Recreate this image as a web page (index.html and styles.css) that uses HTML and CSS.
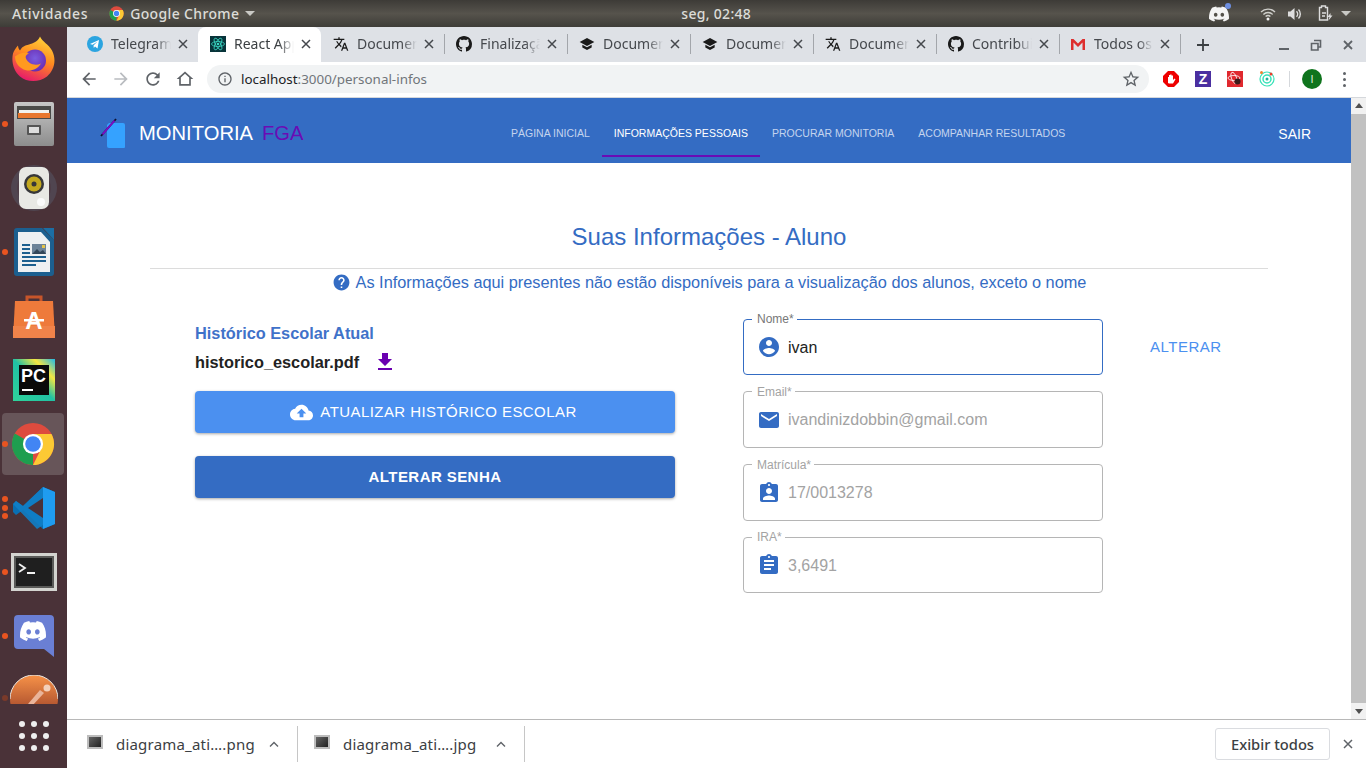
FILE: index.html
```html
<!DOCTYPE html>
<html>

<head>
	<meta charset="utf-8">
	<title>React App</title>
	<link rel="stylesheet" href="styles.css">
</head>

<body>
	<svg class="defs" width="0" height="0">
		<defs>
			<symbol id="i-github" viewBox="0 0 16 16"><path d="M8 0C3.58 0 0 3.58 0 8c0 3.54 2.29 6.53 5.47 7.59.4.07.55-.17.55-.38 0-.19-.01-.82-.01-1.49-2.01.37-2.53-.49-2.69-.94-.09-.23-.48-.94-.82-1.13-.28-.15-.68-.52-.01-.53.63-.01 1.08.58 1.23.82.72 1.21 1.87.87 2.33.66.07-.52.28-.87.51-1.07-1.78-.2-3.64-.89-3.64-3.95 0-.87.31-1.59.82-2.15-.08-.2-.36-1.02.08-2.12 0 0 .67-.21 2.2.82.64-.18 1.32-.27 2-.27.68 0 1.36.09 2 .27 1.53-1.04 2.2-.82 2.2-.82.44 1.1.16 1.92.08 2.12.51.56.82 1.27.82 2.15 0 3.07-1.87 3.75-3.65 3.95.29.25.54.73.54 1.48 0 1.07-.01 1.93-.01 2.2 0 .21.15.46.55.38A8.013 8.013 0 0016 8c0-4.42-3.58-8-8-8z"/></symbol>
			<symbol id="i-translate" viewBox="0 0 24 24"><path d="M12.87 15.07l-2.54-2.51.03-.03c1.74-1.94 2.98-4.17 3.71-6.53H17V4h-7V2H8v2H1v1.99h11.17C11.5 7.92 10.44 9.75 9 11.35 8.07 10.32 7.3 9.19 6.69 8h-2c.73 1.63 1.73 3.17 2.98 4.56l-5.09 5.02L4 19l5-5 3.11 3.11.76-2.04zM18.5 10h-2L12 22h2l1.12-3h4.75L21 22h2l-4.5-12zm-2.62 7l1.62-4.33L19.12 17h-3.24z"/></symbol>
			<symbol id="i-school" viewBox="0 0 24 24"><path d="M5 13.18v4L12 21l7-3.82v-4L12 17l-7-3.82zM12 3L1 9l11 6 11-6-11-6z"/></symbol>
			<symbol id="i-close" viewBox="0 0 10 10"><path d="M1 1l8 8M9 1L1 9" fill="none" stroke="currentColor" stroke-width="1.5"/></symbol>
			<symbol id="i-discord" viewBox="0 0 24 24"><path d="M20.317 4.37a19.79 19.79 0 0 0-4.885-1.515.074.074 0 0 0-.079.037c-.21.375-.444.864-.608 1.25a18.27 18.27 0 0 0-5.487 0 12.64 12.64 0 0 0-.617-1.25.077.077 0 0 0-.079-.037A19.736 19.736 0 0 0 3.677 4.37a.07.07 0 0 0-.032.027C.533 9.046-.32 13.58.099 18.057a.082.082 0 0 0 .031.057 19.9 19.9 0 0 0 5.993 3.03.078.078 0 0 0 .084-.028c.462-.63.874-1.295 1.226-1.994a.076.076 0 0 0-.041-.106 13.107 13.107 0 0 1-1.872-.892.077.077 0 0 1-.008-.128c.126-.094.252-.192.372-.292a.074.074 0 0 1 .077-.01c3.928 1.793 8.18 1.793 12.062 0a.074.074 0 0 1 .078.01c.12.098.246.198.373.292a.077.077 0 0 1-.006.127 12.299 12.299 0 0 1-1.873.892.077.077 0 0 0-.041.107c.36.698.772 1.362 1.225 1.993a.076.076 0 0 0 .084.028 19.839 19.839 0 0 0 6.002-3.03.077.077 0 0 0 .032-.054c.5-5.177-.838-9.674-3.549-13.66a.061.061 0 0 0-.031-.03zM8.02 15.33c-1.183 0-2.157-1.085-2.157-2.419 0-1.333.956-2.419 2.157-2.419 1.21 0 2.176 1.096 2.157 2.42 0 1.333-.956 2.418-2.157 2.418zm7.975 0c-1.183 0-2.157-1.085-2.157-2.419 0-1.333.955-2.419 2.157-2.419 1.21 0 2.176 1.096 2.157 2.42 0 1.333-.946 2.418-2.157 2.418z"/></symbol>
			<symbol id="i-chrome" viewBox="0 0 48 48">
				<circle cx="24" cy="24" r="23" fill="#dd4b3e"/>
				<path d="M24 24L4.1 12.5A23 23 0 0 0 24 47z" fill="#1e9e4f"/>
				<path d="M24 13h20.2A23 23 0 0 1 24 47l10-20z" fill="#fcc934"/>
				<circle cx="24" cy="24" r="11" fill="#fff"/>
				<circle cx="24" cy="24" r="8.5" fill="#4285f4"/>
			</symbol>
		</defs>
	</svg>

	<div class="topbar">
		<span class="top-activities">Atividades</span>
		<svg class="top-chrome" width="15" height="15"><use href="#i-chrome"/></svg>
		<span class="top-app">Google Chrome</span>
		<i class="caret"></i>
		<span class="top-clock">seg, 02:48</span>
		<div class="tray">
			<span class="tray-discord">
				<svg width="20" height="20" viewBox="0 0 24 24" fill="#f4f4f4"><use href="#i-discord"/></svg>
				<i class="tray-badge"></i>
			</span>
			<svg class="tray-wifi" width="16" height="14" viewBox="0 0 16 14"><path d="M1 5a10 10 0 0 1 14 0M3.4 7.4a6.6 6.6 0 0 1 9.2 0M5.6 9.6a3.4 3.4 0 0 1 4.8 0" fill="none" stroke="#cfcfcb" stroke-width="1.4"/><circle cx="8" cy="12" r="1.5" fill="#f0f0f0"/></svg>
			<svg class="tray-vol" width="16" height="14" viewBox="0 0 16 14"><path d="M1 4.5h2.5L7.5 1v12L3.5 9.5H1z" fill="#ddd"/><path d="M9.5 4.2a4 4 0 0 1 0 5.6M11.5 2.5a6.5 6.5 0 0 1 0 9" fill="none" stroke="#ddd" stroke-width="1.4"/></svg>
			<svg class="tray-bat" width="15" height="17" viewBox="0 0 15 17"><path d="M3.5 1h4v1.5h2V15H1.5V2.5h2z" fill="none" stroke="#ddd" stroke-width="1.4"/><path d="M4 8h4M4 11h3" stroke="#ddd" stroke-width="1.3"/><path d="M12.5 8L9.5 12h2L10.5 15.5l4-5h-2z" fill="#ddd"/></svg>
			<i class="caret"></i>
		</div>
	</div>

	<div class="desktop">
		<nav class="dock">
			<div class="dock-slot">
				<svg class="dock-firefox" width="46" height="47" viewBox="0 0 46 46">
					<defs>
						<linearGradient id="ffg" x1="0.7" y1="0" x2="0.3" y2="1"><stop offset="0" stop-color="#ffd43b"/><stop offset="0.45" stop-color="#ff8a1f"/><stop offset="1" stop-color="#e5166e"/></linearGradient>
						<radialGradient id="ffc" cx="0.5" cy="0.4" r="0.6"><stop offset="0" stop-color="#7a5ce0"/><stop offset="1" stop-color="#6a2bb0"/></radialGradient>
					</defs>
					<path d="M29 1c2 5 9 8 12 14 5 10 2 20-5 26-8 6-20 6-27 0C3 36 0 27 2 18c1-3 3-6 5-8 0 2 1 4 2 5 2-4 5-5 9-6 4-1 9-3 11-8z" fill="url(#ffg)"/>
					<circle cx="24" cy="25" r="11" fill="url(#ffc)"/>
					<path d="M4 21c4-3 9-5 14-3-3 1-4 3-3 5 2 5 9 8 15 5-4 7-13 9-19 5-5-3-7-8-7-12z" fill="#ff9a1f"/>
				</svg>
			</div>
			<div class="dock-slot">
				<i class="dock-dot dot-a"></i>
				<svg width="42" height="46" viewBox="0 0 42 46">
					<defs><linearGradient id="cab" x1="0" y1="0" x2="0" y2="1"><stop offset="0" stop-color="#c6c6c6"/><stop offset="1" stop-color="#8d8d8d"/></linearGradient></defs>
					<rect x="1" y="1" width="40" height="44" rx="2" fill="url(#cab)"/>
					<rect x="4" y="5" width="34" height="13" fill="#4a4a48"/>
					<rect x="6" y="9" width="30" height="3" fill="#f2f2ee"/>
					<rect x="5" y="12" width="32" height="5" fill="#e8772e"/>
					<rect x="14" y="24" width="14" height="10" rx="1" fill="#555"/>
					<rect x="16" y="26" width="10" height="6" fill="#ddd"/>
				</svg>
			</div>
			<div class="dock-slot">
				<svg width="48" height="46" viewBox="0 0 48 46">
					<circle cx="24" cy="23" r="23" fill="#5b6a7f" opacity="0.35"/>
					<circle cx="24" cy="23" r="17" fill="#4a3139" opacity="0.4"/>
					<rect x="9" y="2" width="30" height="42" rx="7" fill="#e8e8e4"/>
					<circle cx="24" cy="19" r="10" fill="#37373a"/>
					<circle cx="24" cy="19" r="7.5" fill="#c3a81f"/>
					<circle cx="24" cy="19" r="2.5" fill="#37373a"/>
					<circle cx="31" cy="37" r="4" fill="#fafafa"/>
				</svg>
			</div>
			<div class="dock-slot">
				<i class="dock-dot dot-a"></i>
				<svg width="40" height="48" viewBox="0 0 40 48">
					<path d="M3 0h25l12 12v33a3 3 0 0 1-3 3H3a3 3 0 0 1-3-3V3a3 3 0 0 1 3-3z" fill="#1c5f8f"/>
					<path d="M4 4h23l9 10v30H4z" fill="#eef0f2"/>
					<path d="M29 0l11 12V0z" fill="#1c6ea4"/>
					<path d="M8 16h8v2H8zM8 20h8v2H8zM8 24h8v2H8zM8 28h24v2H8zM8 32h24v2H8zM8 36h14v2H8z" fill="#1c5f8f"/>
					<rect x="18" y="16" width="14" height="10" fill="#6d8398"/>
					<path d="M18 26l5-5 3 3 3-2 3 4z" fill="#33475a"/>
					<rect x="28" y="17" width="3" height="3" fill="#e3c34a"/>
				</svg>
			</div>
			<div class="dock-slot">
				<svg width="42" height="44" viewBox="0 0 42 44">
					<path d="M14 8V3h14v5" fill="none" stroke="#c7552a" stroke-width="3"/>
					<path d="M2 7h38l2 37H0z" fill="#ee7a3b"/>
					<rect y="32" width="42" height="12" fill="#f0834a"/>
					<text class="dock-a" x="21" y="35" text-anchor="middle">A</text>
					<rect x="11" y="25" width="20" height="2.5" fill="#fff"/>
				</svg>
			</div>
			<div class="dock-slot">
				<svg width="42" height="42" viewBox="0 0 42 42">
					<defs><linearGradient id="pcg" x1="0" y1="1" x2="1" y2="0"><stop offset="0" stop-color="#2fd39a"/><stop offset="0.5" stop-color="#21c1a4"/><stop offset="0.75" stop-color="#f5e642"/><stop offset="1" stop-color="#20b8e8"/></linearGradient></defs>
					<rect width="42" height="42" fill="url(#pcg)"/>
					<rect x="6" y="6" width="30" height="30" fill="#0a0a0a"/>
					<text class="dock-pc" x="8" y="23">PC</text>
					<rect x="9" y="30" width="11" height="2" fill="#fff"/>
				</svg>
			</div>
			<div class="dock-slot dock-active">
				<i class="dock-dot dot-a"></i>
				<svg width="44" height="44"><use href="#i-chrome"/></svg>
			</div>
			<div class="dock-slot">
				<i class="dock-dot dot-c1"></i>
				<i class="dock-dot dot-c2"></i>
				<i class="dock-dot dot-c3"></i>
				<svg width="42" height="42" viewBox="0 0 42 42">
					<path d="M30 0l12 5v32l-12 5-20-19L3 28l-3-3V17l3-3 7 5z" fill="#0a6fb3"/>
					<path d="M30 0l12 5v32l-12 5z" fill="#1f9cf0"/>
					<path d="M30 0L10 19 3 14l-3 3 24 25 6-4z" fill="#0f7ec6" opacity="0.9"/>
					<path d="M30 11L15 21l15 10z" fill="#4a3139"/>
				</svg>
			</div>
			<div class="dock-slot">
				<i class="dock-dot dot-a"></i>
				<svg width="46" height="38" viewBox="0 0 46 38">
					<rect width="46" height="38" fill="#d4d4d0"/>
					<rect x="3" y="3" width="40" height="32" fill="#5a5a58"/>
					<rect x="5" y="5" width="36" height="28" fill="#1f1f1f"/>
					<path d="M8 11l6 4-6 4" fill="none" stroke="#f2f2f2" stroke-width="1.8"/>
					<rect x="16" y="19" width="8" height="2" fill="#f2f2f2"/>
				</svg>
			</div>
			<div class="dock-slot">
				<i class="dock-dot dot-a"></i>
				<svg width="40" height="42" viewBox="0 0 40 42">
					<path d="M4 0h32a4 4 0 0 1 4 4v38l-10-8H4a4 4 0 0 1-4-4V4a4 4 0 0 1 4-4z" fill="#6a7fd4"/>
					<svg x="6" y="3" width="26" height="26" viewBox="0 0 24 24" fill="#fff"><use href="#i-discord"/></svg>
				</svg>
			</div>
			<div class="dock-slot dock-cut">
				<i class="dock-dot dot-dim"></i>
				<svg width="48" height="48" viewBox="0 0 48 48">
					<defs><linearGradient id="pmg" x1="0" y1="0" x2="0" y2="1"><stop offset="0" stop-color="#f79248"/><stop offset="0.6" stop-color="#b85a32"/></linearGradient></defs>
					<circle cx="24" cy="24" r="24" fill="url(#pmg)"/>
					<path d="M0 24a24 24 0 0 1 48 0" fill="none" stroke="#e8e4df" stroke-width="1"/>
					<path d="M18 29l12-14 4 3-12 13z" fill="#e9b49a"/>
					<circle cx="37" cy="13" r="3.5" fill="#f3d0ba"/>
				</svg>
			</div>
			<div class="dock-apps">
				<i></i><i></i><i></i><i></i><i></i><i></i><i></i><i></i><i></i>
			</div>
		</nav>

		<div class="window">
			<div class="tabstrip">
				<div class="tab">
					<svg class="tab-ico" viewBox="0 0 16 16"><circle cx="8" cy="8" r="8" fill="#2ba4e0"/><path d="M3 8l9-4-1.5 8.5L8 10.5 6.8 12 6.5 9.5 10.5 5.5 5.5 8.8z" fill="#fff"/></svg>
					<span class="tab-title">Telegram</span>
					<svg class="tab-x"><use href="#i-close"/></svg>
				</div>
				<i class="tab-sep off"></i>
				<div class="tab tab-active">
					<svg class="tab-ico" viewBox="0 0 16 16"><rect width="16" height="16" fill="#08343a"/><g fill="none" stroke="#39d6c2" stroke-width="0.8"><ellipse cx="8" cy="8" rx="6.5" ry="2.5"/><ellipse cx="8" cy="8" rx="6.5" ry="2.5" transform="rotate(60 8 8)"/><ellipse cx="8" cy="8" rx="6.5" ry="2.5" transform="rotate(120 8 8)"/></g><circle cx="8" cy="8" r="1.3" fill="#39d6c2"/></svg>
					<span class="tab-title">React App</span>
					<svg class="tab-x"><use href="#i-close"/></svg>
				</div>
				<i class="tab-sep off"></i>
				<div class="tab">
					<svg class="tab-ico"><use href="#i-translate"/></svg>
					<span class="tab-title">Documentação</span>
					<svg class="tab-x"><use href="#i-close"/></svg>
				</div>
				<i class="tab-sep"></i>
				<div class="tab">
					<svg class="tab-ico"><use href="#i-github"/></svg>
					<span class="tab-title">Finalização</span>
					<svg class="tab-x"><use href="#i-close"/></svg>
				</div>
				<i class="tab-sep"></i>
				<div class="tab">
					<svg class="tab-ico"><use href="#i-school"/></svg>
					<span class="tab-title">Documentação</span>
					<svg class="tab-x"><use href="#i-close"/></svg>
				</div>
				<i class="tab-sep"></i>
				<div class="tab">
					<svg class="tab-ico"><use href="#i-school"/></svg>
					<span class="tab-title">Documentação</span>
					<svg class="tab-x"><use href="#i-close"/></svg>
				</div>
				<i class="tab-sep"></i>
				<div class="tab">
					<svg class="tab-ico"><use href="#i-translate"/></svg>
					<span class="tab-title">Documentação</span>
					<svg class="tab-x"><use href="#i-close"/></svg>
				</div>
				<i class="tab-sep"></i>
				<div class="tab">
					<svg class="tab-ico"><use href="#i-github"/></svg>
					<span class="tab-title">Contribuição</span>
					<svg class="tab-x"><use href="#i-close"/></svg>
				</div>
				<i class="tab-sep"></i>
				<div class="tab tab-last">
					<svg class="tab-ico" viewBox="0 0 16 16"><path d="M1 3h2.5L8 7.5 12.5 3H15v11h-2.5V6.5L8 11 3.5 6.5V14H1z" fill="#dd2e2e"/></svg>
					<span class="tab-title">Todos os e-mails</span>
					<svg class="tab-x"><use href="#i-close"/></svg>
				</div>
				<i class="tab-sep"></i>
				<svg class="tab-new" width="14" height="14" viewBox="0 0 14 14"><path d="M7 1v12M1 7h12" stroke="#3c4043" stroke-width="1.8"/></svg>
				<div class="win-ctrl">
					<svg width="12" height="12" viewBox="0 0 12 12"><path d="M1 10h10" stroke="#5f6368" stroke-width="2"/></svg>
					<svg width="12" height="12" viewBox="0 0 12 12"><path d="M4 1.5h6.5V8H8M1.5 4.5H8V11H1.5z" fill="none" stroke="#5f6368" stroke-width="1.6"/></svg>
					<svg width="12" height="12" viewBox="0 0 12 12"><path d="M2 2l8 8M10 2l-8 8" stroke="#5f6368" stroke-width="1.8"/></svg>
				</div>
			</div>

			<div class="toolbar">
				<svg class="tool-btn" viewBox="0 0 24 24"><path d="M20 11H7.83l5.59-5.59L12 4l-8 8 8 8 1.41-1.41L7.83 13H20v-2z"/></svg>
				<svg class="tool-btn tool-off" viewBox="0 0 24 24"><path d="M12 4l-1.41 1.41L16.17 11H4v2h12.17l-5.58 5.59L12 20l8-8z"/></svg>
				<svg class="tool-btn" viewBox="0 0 24 24"><path d="M17.65 6.35C16.2 4.9 14.21 4 12 4c-4.42 0-7.99 3.58-7.99 8s3.57 8 7.99 8c3.73 0 6.84-2.55 7.73-6h-2.08c-.82 2.33-3.04 4-5.65 4-3.31 0-6-2.69-6-6s2.69-6 6-6c1.66 0 3.14.69 4.22 1.78L13 11h7V4l-2.35 2.35z"/></svg>
				<svg class="tool-btn" viewBox="0 0 24 24"><path d="M12 5.69l5 4.5V18H7v-7.81l5-4.5M12 3L2 12h3v8h14v-8h3L12 3z"/></svg>
				<div class="omnibox">
					<svg class="omni-info" viewBox="0 0 24 24"><path d="M11 7h2v2h-2zm0 4h2v6h-2zm1-9C6.48 2 2 6.48 2 12s4.48 10 10 10 10-4.48 10-10S17.52 2 12 2zm0 18c-4.41 0-8-3.59-8-8s3.59-8 8-8 8 3.59 8 8-3.59 8-8 8z"/></svg>
					<span class="omni-url"><b>localhost</b>:3000/personal-infos</span>
					<svg class="omni-star" viewBox="0 0 24 24"><path d="M22 9.24l-7.19-.62L12 2 9.19 8.63 2 9.24l5.46 4.73L5.82 21 12 17.27 18.18 21l-1.63-7.03L22 9.24zM12 15.4l-3.76 2.27 1-4.28-3.32-2.88 4.38-.38L12 6.1l1.71 4.04 4.38.38-3.32 2.88 1 4.28L12 15.4z"/></svg>
				</div>
				<div class="ext-list">
					<svg class="ext" viewBox="0 0 16 16"><path d="M5 0h6l5 5v6l-5 5H5l-5-5V5z" fill="#ee0000"/><path d="M5 12V6h1v3V4h1.2v4V3.5h1.3V8V4.500H10V9l1.5-1.5 1 .8L10 12.5H6z" fill="#fff"/></svg>
					<svg class="ext" viewBox="0 0 16 16"><rect width="16" height="16" fill="#4a2fa0"/><text class="ext-z" x="8" y="13" text-anchor="middle">Z</text></svg>
					<svg class="ext" viewBox="0 0 16 16"><rect width="16" height="16" fill="#e0282e"/><g fill="none" stroke="#fff" stroke-width="0.8"><ellipse cx="7" cy="7" rx="6" ry="2.5"/><ellipse cx="7" cy="7" rx="6" ry="2.5" transform="rotate(70 7 7)"/></g><circle cx="10.5" cy="10.5" r="3" fill="#3a1a1a"/></svg>
					<svg class="ext" viewBox="0 0 16 16"><circle cx="8" cy="8" r="7" fill="none" stroke="#37e2b8" stroke-width="1.2"/><circle cx="8" cy="8" r="4" fill="none" stroke="#37e2b8" stroke-width="1.5"/><circle cx="8" cy="8" r="1.5" fill="#20b79a"/><circle cx="2.5" cy="1.5" r="1.5" fill="#f08030"/><circle cx="12" cy="3" r="1.5" fill="#e8402e"/></svg>
				</div>
				<i class="tool-sep"></i>
				<span class="avatar">I</span>
				<span class="tool-menu"><i></i><i></i><i></i></span>
			</div>

			<div class="viewport">
				<div class="page">
					<header class="appbar">
						<div class="brand">
							<svg width="28" height="32" viewBox="0 0 28 32">
								<path d="M10 5h14a2 2 0 0 1 2 2v22a1 1 0 0 1-1 1H10a2 2 0 0 1-2-2V7z" fill="#35a2ff"/>
								<path d="M2 18L17 1" stroke="#101030" stroke-width="1.8"/>
								<path d="M3.5 16.3L15.5 2.7" stroke="#7a0cc4" stroke-width="1.8"/>
							</svg>
							<span class="brand-name">MONITORIA</span>
							<span class="brand-sub">FGA</span>
						</div>
						<div class="app-tabs">
							<a class="app-tab">Página Inicial</a>
							<a class="app-tab app-tab-on">Informações Pessoais</a>
							<a class="app-tab">Procurar Monitoria</a>
							<a class="app-tab">Acompanhar Resultados</a>
						</div>
						<a class="logout">SAIR</a>
					</header>

					<main class="content">
						<h1 class="page-title">Suas Informações - Aluno</h1>
						<hr class="rule">
						<p class="notice">
							<svg width="19" height="19" viewBox="0 0 24 24"><path d="M12 2C6.48 2 2 6.48 2 12s4.48 10 10 10 10-4.48 10-10S17.52 2 12 2zm1 17h-2v-2h2v2zm2.07-7.75l-.9.92C13.45 12.9 13 13.5 13 15h-2v-.5c0-1.1.45-2.1 1.17-2.83l1.24-1.26c.37-.36.59-.86.59-1.41 0-1.1-.9-2-2-2s-2 .9-2 2H8c0-2.21 1.79-4 4-4s4 1.79 4 4c0 .88-.36 1.68-.93 2.25z"/></svg>
							As Informações aqui presentes não estão disponíveis para a visualização dos alunos, exceto o nome
						</p>

						<div class="columns">
							<section class="col-left">
								<h2 class="hist-title">Histórico Escolar Atual</h2>
								<div class="hist-file">
									<span>historico_escolar.pdf</span>
									<svg width="24" height="24" viewBox="0 0 24 24"><path d="M19 9h-4V3H9v6H5l7 7 7-7zM5 18v2h14v-2H5z"/></svg>
								</div>
								<button class="btn btn-light">
									<svg width="23" height="23" viewBox="0 0 24 24"><path d="M19.35 10.04C18.67 6.59 15.64 4 12 4 9.11 4 6.6 5.64 5.35 8.04 2.34 8.36 0 10.91 0 14c0 3.31 2.69 6 6 6h13c2.76 0 5-2.24 5-5 0-2.64-2.05-4.78-4.65-4.96zM14 13v4h-4v-4H7l5-5 5 5h-3z"/></svg>
									<span>Atualizar Histórico Escolar</span>
								</button>
								<button class="btn btn-dark"><span>Alterar Senha</span></button>
							</section>

							<section class="col-right">
								<div class="field-row">
									<fieldset class="field field-on">
										<legend>Nome*</legend>
										<div class="field-body">
											<svg viewBox="0 0 24 24"><path d="M12 2C6.48 2 2 6.48 2 12s4.48 10 10 10 10-4.48 10-10S17.52 2 12 2zm0 3c1.66 0 3 1.34 3 3s-1.34 3-3 3-3-1.34-3-3 1.34-3 3-3zm0 14.2c-2.5 0-4.71-1.28-6-3.22.03-1.99 4-3.08 6-3.08 1.99 0 5.97 1.09 6 3.08-1.29 1.94-3.5 3.22-6 3.22z"/></svg>
											<span>ivan</span>
										</div>
									</fieldset>
									<a class="field-edit">Alterar</a>
								</div>
								<fieldset class="field">
									<legend>Email*</legend>
									<div class="field-body">
										<svg viewBox="0 0 24 24"><path d="M20 4H4c-1.1 0-1.99.9-1.99 2L2 18c0 1.1.9 2 2 2h16c1.1 0 2-.9 2-2V6c0-1.1-.9-2-2-2zm0 4l-8 5-8-5V6l8 5 8-5v2z"/></svg>
										<span>ivandinizdobbin@gmail.com</span>
									</div>
								</fieldset>
								<fieldset class="field">
									<legend>Matrícula*</legend>
									<div class="field-body">
										<svg viewBox="0 0 24 24"><path d="M19 3h-4.18C14.4 1.84 13.3 1 12 1c-1.3 0-2.4.84-2.82 2H5c-1.1 0-2 .9-2 2v14c0 1.1.9 2 2 2h14c1.1 0 2-.9 2-2V5c0-1.1-.9-2-2-2zm-7 0c.55 0 1 .45 1 1s-.45 1-1 1-1-.45-1-1 .45-1 1-1zm0 4c1.66 0 3 1.34 3 3s-1.34 3-3 3-3-1.34-3-3 1.34-3 3-3zm6 12H6v-1.4c0-2 4-3.1 6-3.1s6 1.1 6 3.1V19z"/></svg>
										<span>17/0013278</span>
									</div>
								</fieldset>
								<fieldset class="field">
									<legend>IRA*</legend>
									<div class="field-body">
										<svg viewBox="0 0 24 24"><path d="M19 3h-4.18C14.4 1.84 13.3 1 12 1c-1.3 0-2.4.84-2.82 2H5c-1.1 0-2 .9-2 2v14c0 1.1.9 2 2 2h14c1.1 0 2-.9 2-2V5c0-1.1-.9-2-2-2zm-7 0c.55 0 1 .45 1 1s-.45 1-1 1-1-.45-1-1 .45-1 1-1zm2 14H7v-2h7v2zm3-4H7v-2h10v2zm0-4H7V7h10v2z"/></svg>
										<span>3,6491</span>
									</div>
								</fieldset>
							</section>
						</div>
					</main>
				</div>

				<div class="scrollbar">
					<i class="arrow-up"></i>
					<div class="scroll-thumb"></div>
					<i class="arrow-down"></i>
				</div>
			</div>

			<footer class="downloads">
				<div class="dl-item">
					<i class="dl-ico"></i>
					<span class="dl-name">diagrama_ati….png</span>
					<svg class="dl-up" width="10" height="6" viewBox="0 0 10 6"><path d="M1 5.5L5 1.5l4 4" fill="none" stroke="#5f6368" stroke-width="1.4"/></svg>
				</div>
				<div class="dl-item">
					<i class="dl-ico"></i>
					<span class="dl-name">diagrama_ati….jpg</span>
					<svg class="dl-up" width="10" height="6" viewBox="0 0 10 6"><path d="M1 5.5L5 1.5l4 4" fill="none" stroke="#5f6368" stroke-width="1.4"/></svg>
				</div>
				<button class="dl-all">Exibir todos</button>
				<svg class="dl-close" width="10" height="10"><use href="#i-close"/></svg>
			</footer>
		</div>
	</div>
</body>

</html>
```

FILE: styles.css
```css
* {
	box-sizing: border-box;
}

html,
body {
	margin: 0;
	height: 768px;
	overflow: hidden;
}

body {
	display: flex;
	flex-direction: column;
	font-family: "Liberation Sans", Arial, sans-serif;
	background: #fff;
}

.defs {
	position: absolute;
}

i {
	display: block;
	font-style: normal;
}

/* ubuntu top bar */
.topbar {
	height: 27px;
	flex: none;
	display: flex;
	align-items: center;
	padding-left: 12px;
	background: linear-gradient(#3d3b37, #56534c 50%, #3e3d38);
	color: #dcdcd8;
	font-family: "Noto Sans", sans-serif;
	font-size: 14px;
	font-weight: 500;
	letter-spacing: 0.65px;
}

.top-chrome {
	margin-left: 21px;
}

.top-app {
	margin-left: 6px;
	letter-spacing: 0.35px;
}

.caret {
	width: 0;
	height: 0;
	margin-left: 6px;
	border: 5px solid transparent;
	border-top: 5px solid #c9c9c5;
	border-bottom: 0;
}

.top-clock {
	margin-left: 426px;
	letter-spacing: 0.3px;
}

.tray {
	margin-left: auto;
	display: flex;
	align-items: center;
	padding-right: 15px;
}

.tray-discord {
	position: relative;
	display: flex;
	margin-right: 31px;
}

.tray-badge {
	position: absolute;
	top: -1px;
	right: -2px;
	width: 6px;
	height: 6px;
	border-radius: 50%;
	background: #6d8ee0;
}

.tray-wifi {
	margin-right: 11px;
}

.tray-vol {
	margin-right: 15px;
}

.tray .caret {
	margin-left: 8px;
}

/* dock */
.desktop {
	flex: 1;
	display: flex;
	min-height: 0;
}

.dock {
	width: 67px;
	flex: none;
	padding-top: 1px;
	background: #4a3238;
	overflow: hidden;
}

.dock-slot {
	position: relative;
	height: 64px;
	display: flex;
	align-items: center;
	justify-content: center;
}

.dock-active {
	height: 62px;
	margin: 1px 3px 1px 2px;
	border-radius: 4px;
	background: #675559;
}

.dock-firefox {
	margin-bottom: 4px;
}

.dock-cut {
	height: 36px;
	overflow: hidden;
	align-items: flex-start;
	padding-top: 7px;
}

.dock-dot {
	position: absolute;
	left: 2px;
	top: 29px;
	width: 6px;
	height: 6px;
	border-radius: 50%;
	background: #e95420;
}

.dock-active .dot-a {
	left: 0;
	top: 28px;
}

.dot-c1 {
	top: 20px;
}

.dot-c2 {
	top: 29px;
}

.dot-c3 {
	top: 37px;
}

.dot-dim {
	top: 27px;
	background: #7a3a2a;
}

.dock-a {
	font-family: "Liberation Sans", sans-serif;
	font-size: 24px;
	font-weight: bold;
	fill: #fff;
}

.dock-pc {
	font-family: "Liberation Sans", sans-serif;
	font-size: 18px;
	font-weight: bold;
	fill: #fff;
}

.dock-apps {
	display: grid;
	grid-template-columns: repeat(3, 6px);
	gap: 6px;
	justify-content: center;
	margin-top: 17px;
}

.dock-apps i {
	width: 6px;
	height: 6px;
	border-radius: 50%;
	background: #eee;
}

/* chrome window */
.window {
	flex: 1;
	min-width: 0;
	display: flex;
	flex-direction: column;
}

.tabstrip {
	height: 35px;
	flex: none;
	display: flex;
	align-items: center;
	padding-left: 9px;
	background: #dee1e6;
	font-family: "Noto Sans", sans-serif;
	font-size: 14px;
	color: #45484d;
}

.tab {
	width: 122px;
	height: 35px;
	flex: none;
	display: flex;
	align-items: center;
	padding: 0 10px 2px 11px;
}

.tab-active {
	width: 123px;
	margin-left: -1px;
	border-radius: 8px 8px 0 0;
	background: #fff;
	padding-left: 12px;
	color: #3c4043;
}

.tab-last {
	width: 121px;
	margin-left: -1px;
}

.tab-ico {
	width: 16px;
	height: 16px;
	flex: none;
	margin-right: 8px;
	fill: #1a1a1a;
}

.tab-title {
	flex: 1;
	min-width: 0;
	overflow: hidden;
	white-space: nowrap;
	-webkit-mask-image: linear-gradient(to right, #000 75%, transparent 100%);
	mask-image: linear-gradient(to right, #000 75%, transparent 100%);
}

.tab-x {
	width: 10px;
	height: 10px;
	flex: none;
	margin-left: 7px;
	color: #45484d;
}

.tab-sep {
	width: 1px;
	height: 20px;
	flex: none;
	margin-bottom: 1px;
	background: #a3a6ab;
}

.tab-sep.off {
	background: transparent;
}

.tab-new {
	margin-left: 15px;
}

.win-ctrl {
	margin-left: auto;
	display: flex;
	gap: 20px;
	padding-right: 12px;
}

.toolbar {
	height: 36px;
	flex: none;
	display: flex;
	align-items: center;
	padding: 0 0 1px 12px;
	background: #fff;
	border-bottom: 1px solid #d5d8dc;
}

.tool-btn {
	width: 20px;
	height: 20px;
	flex: none;
	margin-right: 12px;
	fill: #5f6368;
}

.tool-off {
	fill: #b9bcc0;
}

.omnibox {
	width: 942px;
	height: 28px;
	flex: none;
	display: flex;
	align-items: center;
	padding: 0 8px 0 10px;
	border-radius: 14px;
	background: #f1f3f4;
}

.omni-info {
	width: 16px;
	height: 16px;
	margin-right: 8px;
	fill: #5f6368;
}

.omni-url {
	margin-top: -1px;
	font-family: "Noto Sans", sans-serif;
	font-size: 13.4px;
	color: #70757a;
}

.omni-url b {
	font-weight: normal;
	color: #202124;
}

.omni-star {
	width: 20px;
	height: 20px;
	margin-left: auto;
	fill: #5f6368;
}

.ext-list {
	display: flex;
	gap: 16px;
	margin-left: 14px;
}

.ext {
	width: 16px;
	height: 16px;
}

.ext-z {
	font-family: "Liberation Sans", sans-serif;
	font-size: 14px;
	font-weight: bold;
	fill: #fff;
}

.tool-sep {
	width: 1px;
	height: 16px;
	margin-left: 14px;
	background: #d5d8dc;
}

.avatar {
	width: 20px;
	height: 20px;
	margin-left: 12px;
	border-radius: 50%;
	background: #0f741d;
	color: #d8e8d8;
	font-size: 11px;
	line-height: 20px;
	text-align: center;
}

.tool-menu {
	display: flex;
	flex-direction: column;
	gap: 3px;
	margin-left: 21px;
}

.tool-menu i {
	width: 3px;
	height: 3px;
	border-radius: 50%;
	background: #5f6368;
}

/* page */
.viewport {
	flex: 1;
	min-height: 0;
	display: flex;
}

.page {
	flex: 1;
	min-width: 0;
	background: #fff;
}

.appbar {
	height: 65px;
	display: flex;
	align-items: center;
	padding-left: 32px;
	background: #346cc3;
}

.brand {
	width: 204px;
	display: flex;
	align-items: center;
	font-size: 20.2px;
	white-space: nowrap;
}

.brand svg {
	margin: 6px 12px 0 0;
	flex: none;
}

.brand-name {
	padding-top: 6px;
	color: #fff;
}

.brand-sub {
	padding-top: 6px;
	margin-left: 9px;
	color: #6a0cb5;
}

.app-tabs {
	display: flex;
	align-self: flex-start;
	margin-left: 196px;
}

.app-tab {
	display: flex;
	align-items: center;
	height: 59px;
	padding: 13px 12px 0;
	font-size: 10.5px;
	text-transform: uppercase;
	color: #c4d4ee;
	border-bottom: 2px solid transparent;
}

.app-tab-on {
	color: #fff;
	border-bottom-color: #6a0cb5;
}

.logout {
	margin-left: auto;
	padding: 6px 40px 0 0;
	color: #fff;
	font-size: 14px;
}

.content {
	padding-top: 60px;
}

.page-title {
	margin: 0;
	font-size: 24px;
	font-weight: normal;
	line-height: 28px;
	text-align: center;
	color: #346cc3;
}

.rule {
	width: 1118px;
	height: 1px;
	margin: 17px auto 0;
	border: 0;
	background: #dcdcdc;
}

.notice {
	display: flex;
	justify-content: center;
	align-items: center;
	gap: 5px;
	margin: 3px 0 0;
	height: 20px;
	font-size: 16.32px;
	line-height: 20px;
	color: #346cc3;
}

.notice svg {
	fill: #346cc3;
}

.columns {
	display: flex;
	gap: 68px;
	margin-top: 20px;
	padding-left: 128px;
}

.col-left {
	width: 480px;
	padding-top: 12px;
}

.hist-title {
	margin: 0;
	font-size: 16.32px;
	font-weight: bold;
	line-height: 18px;
	color: #3f72c9;
}

.hist-file {
	display: flex;
	align-items: center;
	gap: 14px;
	margin-top: 8px;
	font-size: 16.32px;
	font-weight: bold;
	line-height: 20px;
	color: #222;
}

.hist-file svg {
	fill: #6a00b0;
}

.btn {
	width: 100%;
	height: 42px;
	display: flex;
	align-items: center;
	justify-content: center;
	gap: 7px;
	border: 0;
	border-radius: 4px;
	color: #fff;
	font-family: "Liberation Sans", sans-serif;
	font-size: 15px;
	letter-spacing: 0.43px;
	text-transform: uppercase;
	box-shadow: 0 1px 3px rgba(0, 0, 0, 0.35);
}

.btn span {
	margin-top: -2px;
}

.btn svg {
	fill: #fff;
}

.btn-light {
	margin-top: 17px;
	padding-right: 9px;
	background: #4b90f0;
}

.btn-dark {
	margin-top: 23px;
	background: #346cc3;
	font-weight: bold;
}

.col-right {
	display: flex;
	flex-direction: column;
	gap: 9.8px;
}

.field-row {
	display: flex;
	align-items: center;
}

.field {
	width: 360px;
	margin: 0;
	padding: 0;
	border: 1px solid #b5b5b5;
	border-radius: 4px;
	font-size: 16px;
	color: #a3a3a3;
}

.field legend {
	margin-left: 8px;
	padding: 0 3px 0 5px;
	font-size: 12px;
	line-height: 14px;
	color: #a3a3a3;
}

.field-body {
	height: 48px;
	display: flex;
	align-items: center;
	padding: 0 0 6px 13px;
}

.field-body span {
	margin-top: 1px;
}

.field svg {
	width: 24px;
	height: 24px;
	flex: none;
	margin-right: 7px;
	fill: #346cc3;
}

.field-on {
	border-color: #346cc3;
	color: #222;
}

.field-on legend {
	color: #777;
}

.field-edit {
	margin-left: 47px;
	margin-top: 6px;
	font-size: 15px;
	letter-spacing: 0.5px;
	text-transform: uppercase;
	color: #4b90f0;
}

.scrollbar {
	width: 15px;
	flex: none;
	display: flex;
	flex-direction: column;
	align-items: center;
	background: #f1f1f1;
}

.arrow-up,
.arrow-down {
	width: 0;
	height: 0;
	margin: 5px 0 5px;
	border: 4px solid transparent;
	border-top: 0;
	border-bottom: 5px solid #505050;
}

.arrow-down {
	border-top: 5px solid #505050;
	border-bottom: 0;
	margin: 6px 0 5px;
}

.scroll-thumb {
	width: 100%;
	flex: 1;
	margin: 1px 0 0;
	background: #c1c1c1;
}

/* downloads bar */
.downloads {
	height: 49px;
	flex: none;
	display: flex;
	align-items: center;
	padding-left: 4px;
	border-top: 1px solid #b8b8b8;
	background: #fff;
	font-family: "Noto Sans", sans-serif;
	font-size: 15px;
	letter-spacing: 0.2px;
	color: #3c4043;
}

.dl-item {
	width: 227px;
	height: 36px;
	display: flex;
	align-items: center;
	padding-left: 16px;
	border-right: 1px solid #c6c6c6;
}

.dl-ico {
	width: 16px;
	height: 14px;
	margin: -4px 13px 0 0;
	border: 2px solid #bdbdbd;
	background: linear-gradient(135deg, #666, #222);
}

.dl-name {
	width: 139px;
	white-space: nowrap;
}

.dl-up {
	margin-left: 14px;
}

.dl-all {
	margin-left: auto;
	width: 115px;
	height: 32px;
	border: 1px solid #dadce0;
	border-radius: 3px;
	background: #fff;
	color: #3c4043;
	font-family: "Noto Sans", sans-serif;
	font-size: 14.7px;
	font-weight: 500;
}

.dl-close {
	margin: 0 13px;
	color: #5f6368;
}
```
